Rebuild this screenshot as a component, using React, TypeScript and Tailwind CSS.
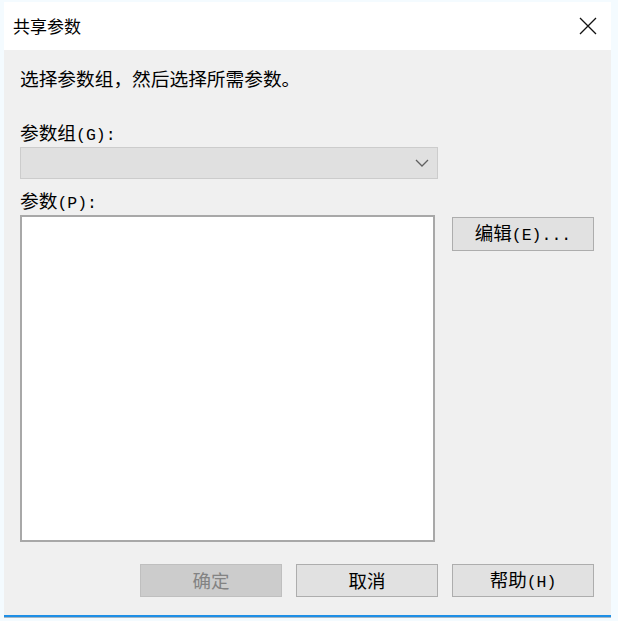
const font = "font-['Noto_Sans_CJK_SC','Noto_Sans',sans-serif]";

// half-width ASCII parts, like the monospace system font in the dialog
function Ascii({ children }: { children: string }) {
  return <span className="font-['Liberation_Mono',monospace] text-[16.5px]">{children}</span>;
}

export default function App() {
  return (
    <div className={`w-[618px] h-[621px] bg-[#f4fbff] pt-[2px] pl-[4px] ${font}`}>
      <div className="w-[607px] h-[613px] flex flex-col bg-[#f0f0f0]">
        {/* Title bar */}
        <div className="h-[48px] bg-white flex items-center justify-between pl-[9px] pr-[14px]">
          <span className="text-[17px] text-black">共享参数</span>
          <svg width="18" height="18" viewBox="0 0 18 18" className="text-[#111]">
            <path d="M1 1 L17 17 M17 1 L1 17" stroke="currentColor" strokeWidth="1.3" fill="none" />
          </svg>
        </div>

        {/* Body */}
        <div className="flex flex-col pl-[16px] pr-[17px] text-[18.7px] text-black">
          <div className="mt-[16px] h-[24px] leading-[24px]">选择参数组，然后选择所需参数。</div>

          <div className="mt-[30px] h-[24px] leading-[24px]">
            参数组<Ascii>(G):</Ascii>
          </div>
          <div className="mt-[3px] w-[418px] h-[32px] bg-[#e0e0e0] border border-[#cccccc] flex items-center justify-end pr-[8px]">
            <svg width="14" height="8" viewBox="0 0 14 8">
              <path d="M1 1 L7 7 L13 1" stroke="#606060" strokeWidth="1.3" fill="none" />
            </svg>
          </div>

          <div className="mt-[9px] h-[24px] leading-[24px]">
            参数<Ascii>(P):</Ascii>
          </div>
          <div className="mt-[3px] flex">
            <div className="w-[415px] h-[327px] bg-white border-2 border-[#a8a8a8]" />
            <button className="ml-[17px] mt-[2px] w-[142px] h-[34px] bg-[#e1e1e1] border border-[#adadad] text-[18.5px] text-black">
              编辑<Ascii>(E)...</Ascii>
            </button>
          </div>

          <div className="mt-[22px] flex justify-end gap-[14px]">
            <button className="w-[142px] h-[33px] bg-[#cccccc] border border-[#bfbfbf] text-[18.5px] text-[#838383]">
              确定
            </button>
            <button className="w-[142px] h-[33px] bg-[#e1e1e1] border border-[#adadad] text-[18.5px] text-black">
              取消
            </button>
            <button className="w-[142px] h-[33px] bg-[#e1e1e1] border border-[#adadad] text-[18.5px] text-black">
              帮助<Ascii>(H)</Ascii>
            </button>
          </div>
        </div>
      </div>
      <div className="w-[607px] h-[2px] bg-[#1e8fe6]" />
      <div className="w-[607px] h-[1px] bg-[#a7b7c4]" />
    </div>
  );
}
